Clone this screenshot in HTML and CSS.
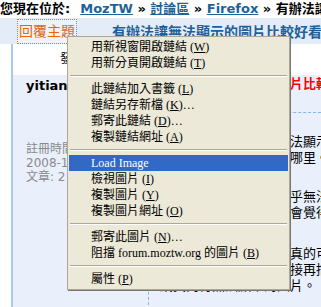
FILE: index.html
```html
<!DOCTYPE html>
<html lang="zh-Hant">
<head>
    <meta charset="UTF-8">
    <title>有辦法讓無法顯示的圖片比較好看嗎</title>
    <link rel="stylesheet" href="styles.css">
</head>
<body>
    <div class="crumbs"><span class="crumbs_label">您現在位於:</span><a href="#">MozTW</a> » <a href="#">討論區</a> » <a href="#">Firefox</a> » 有辦法讓無法顯示的圖片比較好看嗎</div>

    <div class="topic_bar">
        <span class="reply_btn">回覆主題</span>
        <span class="topic_title">有辦法讓無法顯示的圖片比較好看嗎？</span>
    </div>

    <div class="post_table">
        <div class="head_row">
            <div class="head_author">發表人</div>
            <div class="head_msg">內容</div>
        </div>
        <div class="post_row">
            <div class="author">
                <div class="author_name">yitian</div>
                <div class="author_info">
                    註冊時間: 2008-12-03<br>
                    2008-12-03<br>
                    文章: 2
                </div>
            </div>
            <div class="message">
                <div class="subject">有辦法讓無法顯示的圖片比較好看嗎？</div>
                <p class="post_text">瀏覽網頁時常常遇到無法顯示的圖片，<br>讓人不清楚問題究竟在哪里。</p>
                <p class="post_text">這樣的情形在網頁上似乎無法避免，<br>看起來很不美觀，讓人會覺得很亂。</p>
                <p class="post_text">不知道有沒有什麼方法真的可以，<br>把這些圖片藏起來或直接再擋掉，<br>網頁內有無法顯示的圖片。</p>
            </div>
        </div>
    </div>

    <!-- right click menu -->
    <div class="ctx_menu">
        <div class="ctx_item">用新視窗開啟鏈結 (<u>W</u>)</div>
        <div class="ctx_item">用新分頁開啟鏈結 (<u>T</u>)</div>
        <div class="ctx_sep"></div>
        <div class="ctx_item">此鏈結加入書籤 (<u>L</u>)</div>
        <div class="ctx_item">鏈結另存新檔 (<u>K</u>)…</div>
        <div class="ctx_item">郵寄此鏈結 (<u>D</u>)…</div>
        <div class="ctx_item">複製鏈結網址 (<u>A</u>)</div>
        <div class="ctx_sep"></div>
        <div class="ctx_item ctx_active">Load Image</div>
        <div class="ctx_item">檢視圖片 (<u>I</u>)</div>
        <div class="ctx_item">複製圖片 (<u>Y</u>)</div>
        <div class="ctx_item">複製圖片網址 (<u>O</u>)</div>
        <div class="ctx_sep"></div>
        <div class="ctx_item">郵寄此圖片 (<u>N</u>)…</div>
        <div class="ctx_item">阻擋 forum.moztw.org 的圖片 (<u>B</u>)</div>
        <div class="ctx_sep"></div>
        <div class="ctx_item">屬性 (<u>P</u>)</div>
    </div>
</body>
</html>
```

FILE: styles.css
```css
body {
    margin: 0;
    background: #ffffff;
    font-family: "DejaVu Sans", "Noto Sans CJK TC", sans-serif;
    width: 321px;
    height: 307px;
    overflow: hidden;
    position: relative;
}

.crumbs {
    height: 18px;
    line-height: 17px;
    font-size: 13px;
    font-weight: bold;
    white-space: nowrap;
    overflow: hidden;
    color: #000;
}
.crumbs_label {
    margin-right: 10px;
}
.crumbs a {
    color: #1d6398;
}

.topic_bar {
    height: 26px;
    display: flex;
    align-items: center;
    background: #e4ecf7;
    white-space: nowrap;
    overflow: hidden;
}
.reply_btn {
    margin-left: 17px;
    width: 58px;
    height: 23px;
    line-height: 23px;
    text-align: center;
    border: 1px dotted #e0761c;
    color: #e0680e;
    font-size: 14px;
    background: #eef3fa;
    flex-shrink: 0;
}
.topic_title {
    margin-left: 35px;
    font-size: 14px;
    font-weight: bold;
    color: #1f5f9a;
}

.post_table {
    margin-left: 11px;
    border-left: 2px solid #a6c9f0;
}
.head_row {
    height: 31px;
    display: flex;
    background: #ffffff;
    font-size: 12px;
    line-height: 31px;
}
.head_author {
    width: 135px;
    padding-left: 47px;
    box-sizing: border-box;
}
.post_row {
    display: flex;
    background: #e9f0fb;
    height: 240px;
}
.author {
    width: 135px;
    box-sizing: border-box;
    padding: 3px 0 0 13px;
    white-space: nowrap;
    overflow: hidden;
}
.author_name {
    font-weight: bold;
    font-size: 13px;
    line-height: 16px;
}
.author_info {
    margin-top: 48px;
    font-size: 12px;
    line-height: 14px;
    color: #8a8a8a;
}
.message {
    flex: 1;
    border-left: 1px dashed #7fb6ee;
    padding-left: 11px;
    white-space: nowrap;
    overflow: hidden;
}
.subject {
    margin-top: 1px;
    height: 37px;
    line-height: 16px;
    font-size: 13px;
    font-weight: bold;
    color: #ff0000;
    border-bottom: 1px dashed #7fb6ee;
    box-sizing: border-box;
}
.post_text {
    margin: 21px 0 0 0;
    font-size: 13px;
    line-height: 16px;
}
.post_text + .post_text {
    margin-top: 23px;
}
.post_text:last-child {
    margin-top: 25px;
}

.ctx_menu {
    position: absolute;
    left: 67px;
    top: 36px;
    width: 219px;
    padding: 2px 1px;
    background: #ece9d8;
    border: 1px solid #aca899;
    box-shadow: 1px 1px 0 #77766f;
    font-family: "Liberation Serif", "Noto Sans CJK TC", serif;
    font-size: 12px;
    color: #000;
}
.ctx_item {
    height: 16px;
    line-height: 16px;
    padding-left: 22px;
    white-space: nowrap;
}
.ctx_active {
    background: #316ac5;
    color: #ffffff;
}
.ctx_sep {
    margin: 4px 1px;
    border-top: 1px solid #aca899;
    border-bottom: 1px solid #ffffff;
}
```
